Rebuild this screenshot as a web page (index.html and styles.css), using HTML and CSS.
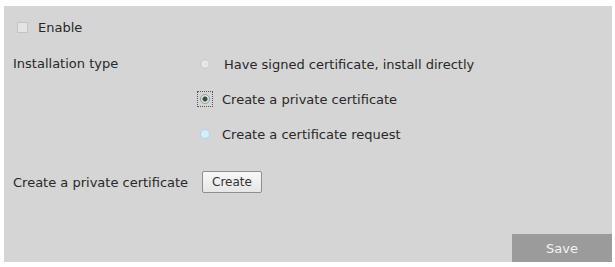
FILE: index.html
```html
<!DOCTYPE html>
<html lang="en">
<head>
  <meta charset="UTF-8" />
  <title>Certificate</title>
  <link rel="stylesheet" href="styles.css">
</head>
<body>

  <div class="panel">
    <div class="enable-row">
      <span class="check"></span>
      <span>Enable</span>
    </div>

    <div class="row type-row">
      <div class="label">Installation type</div>
      <div class="options">
        <div class="option first">
          <span class="radio"></span>
          <span>Have signed certificate, install directly</span>
        </div>
        <div class="option">
          <span class="focus"><span class="radio checked"></span></span>
          <span>Create a private certificate</span>
        </div>
        <div class="option">
          <span class="radio hover"></span>
          <span>Create a certificate request</span>
        </div>
      </div>
    </div>

    <div class="row create-row">
      <div class="label">Create a private certificate</div>
      <button class="create-btn">Create</button>
    </div>

    <div class="footer">
      <button class="save-btn">Save</button>
    </div>
  </div>

</body>
</html>
```

FILE: styles.css
```css
body {
  margin: 0;
  background: #ffffff;
  font-family: "DejaVu Sans", Verdana, sans-serif;
  font-size: 13px;
  color: #282828;
}

.panel {
  margin: 6px 3px 0 4px;
  height: 256px;
  background: #d5d5d5;
  box-sizing: border-box;
  padding: 13px 0 0 9px;
  display: flex;
  flex-direction: column;
}

.enable-row {
  display: flex;
  align-items: center;
  gap: 10px;
  padding-left: 4px;
  height: 16px;
}

.check {
  width: 9px;
  height: 9px;
  border: 1px solid #c4c4c4;
  background: #e4e4e4;
}

.row {
  display: flex;
}

.label {
  width: 187px;
}

.type-row {
  margin-top: 20px;
}

.type-row .label {
  line-height: 18px;
}

.options {
  display: flex;
  flex-direction: column;
  gap: 17px;
}

.option {
  display: flex;
  align-items: center;
  height: 18px;
  gap: 12px;
}

.option.first {
  gap: 14px;
}

.radio {
  display: block;
  width: 8px;
  height: 8px;
  border-radius: 50%;
  border: 1px solid #c6c6c6;
  background: #e6e6e6;
}

.radio.checked {
  background: radial-gradient(circle, #33503f 0 2px, #e4e4e4 3px);
  border-color: #9a9a9a;
}

.radio.hover {
  border-color: #a6d8ec;
  background: #d7eef8;
}

.focus {
  display: flex;
  align-items: center;
  justify-content: center;
  width: 14px;
  height: 14px;
  border: 1px dotted #555;
  margin-left: -3px;
  margin-right: -3px;
}

.create-row {
  margin-top: 28px;
  align-items: center;
}

.create-row .label {
  width: 189px;
}

.create-btn {
  font-family: inherit;
  font-size: 12px;
  color: #333;
  height: 22px;
  padding: 0 9px;
  background: linear-gradient(#f8f8f8, #e6e6e6);
  border: 1px solid #8e8e8e;
  border-radius: 2px;
}

.footer {
  margin-top: auto;
  display: flex;
  justify-content: flex-end;
}

.save-btn {
  width: 100px;
  height: 28px;
  border: none;
  background: #9b9b9b;
  color: #f2f2f2;
  font-family: inherit;
  font-size: 13px;
}
```
